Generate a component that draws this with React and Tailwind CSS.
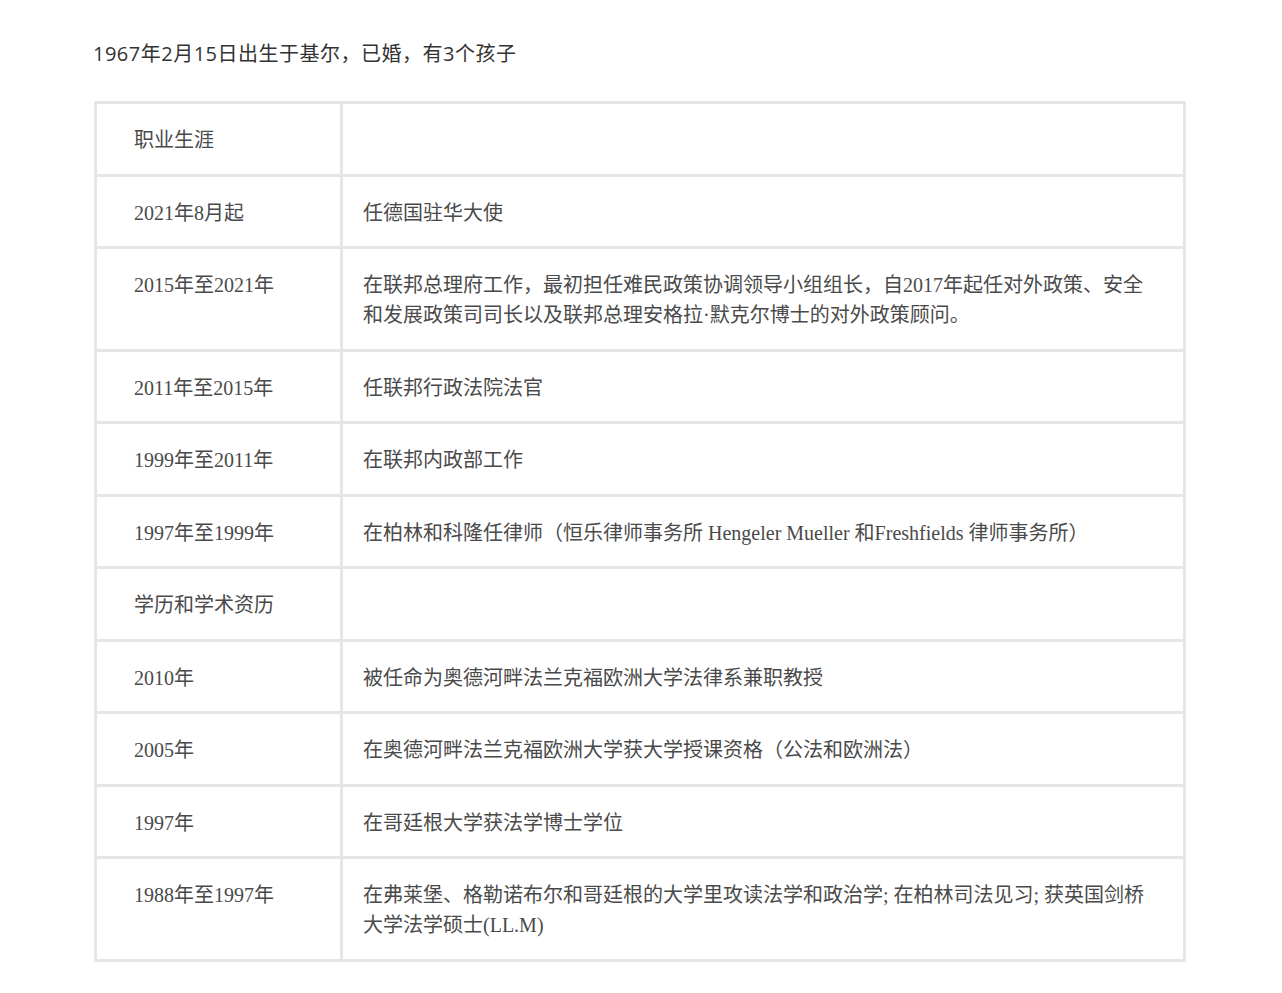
const rows = [
  { left: "职业生涯", right: "" },
  { left: "2021年8月起", right: "任德国驻华大使" },
  {
    left: "2015年至2021年",
    right:
      "在联邦总理府工作，最初担任难民政策协调领导小组组长，自2017年起任对外政策、安全和发展政策司司长以及联邦总理安格拉·默克尔博士的对外政策顾问。",
  },
  { left: "2011年至2015年", right: "任联邦行政法院法官" },
  { left: "1999年至2011年", right: "在联邦内政部工作" },
  {
    left: "1997年至1999年",
    right: "在柏林和科隆任律师（恒乐律师事务所 Hengeler Mueller 和Freshfields 律师事务所）",
  },
  { left: "学历和学术资历", right: "" },
  { left: "2010年", right: "被任命为奥德河畔法兰克福欧洲大学法律系兼职教授" },
  { left: "2005年", right: "在奥德河畔法兰克福欧洲大学获大学授课资格（公法和欧洲法）" },
  { left: "1997年", right: "在哥廷根大学获法学博士学位" },
  {
    left: "1988年至1997年",
    right: "在弗莱堡、格勒诺布尔和哥廷根的大学里攻读法学和政治学; 在柏林司法见习; 获英国剑桥大学法学硕士(LL.M)",
  },
];

export default function App() {
  return (
    <div className="min-h-[993px] bg-white pl-[93px] pt-[39px]">
      <p className="text-[20px] leading-[30px] tracking-[0.5px] text-[#333] font-['Open_Sans','Noto_Sans_CJK_SC',sans-serif]">
        1967年2月15日出生于基尔，已婚，有3个孩子
      </p>
      <table className="mt-[32px] ml-px w-[1092px] table-fixed border-collapse border-[3px] border-[#e6e6e6] font-['Liberation_Serif','Noto_Sans_CJK_SC',serif] text-[20px] leading-[30px] text-[#4a4a4a]">
        <colgroup>
          <col className="w-[246px]" />
          <col />
        </colgroup>
        <tbody>
          {rows.map((r, i) => (
            <tr key={i}>
              <td className="border-[3px] border-[#e6e6e6] pl-[37px] pr-4 pt-[21px] pb-[18.5px] align-top">
                {r.left}
              </td>
              <td className="border-[3px] border-[#e6e6e6] pl-[20px] pr-[34px] pt-[21px] pb-[18.5px] align-top">
                {r.right}
              </td>
            </tr>
          ))}
        </tbody>
      </table>
    </div>
  );
}
